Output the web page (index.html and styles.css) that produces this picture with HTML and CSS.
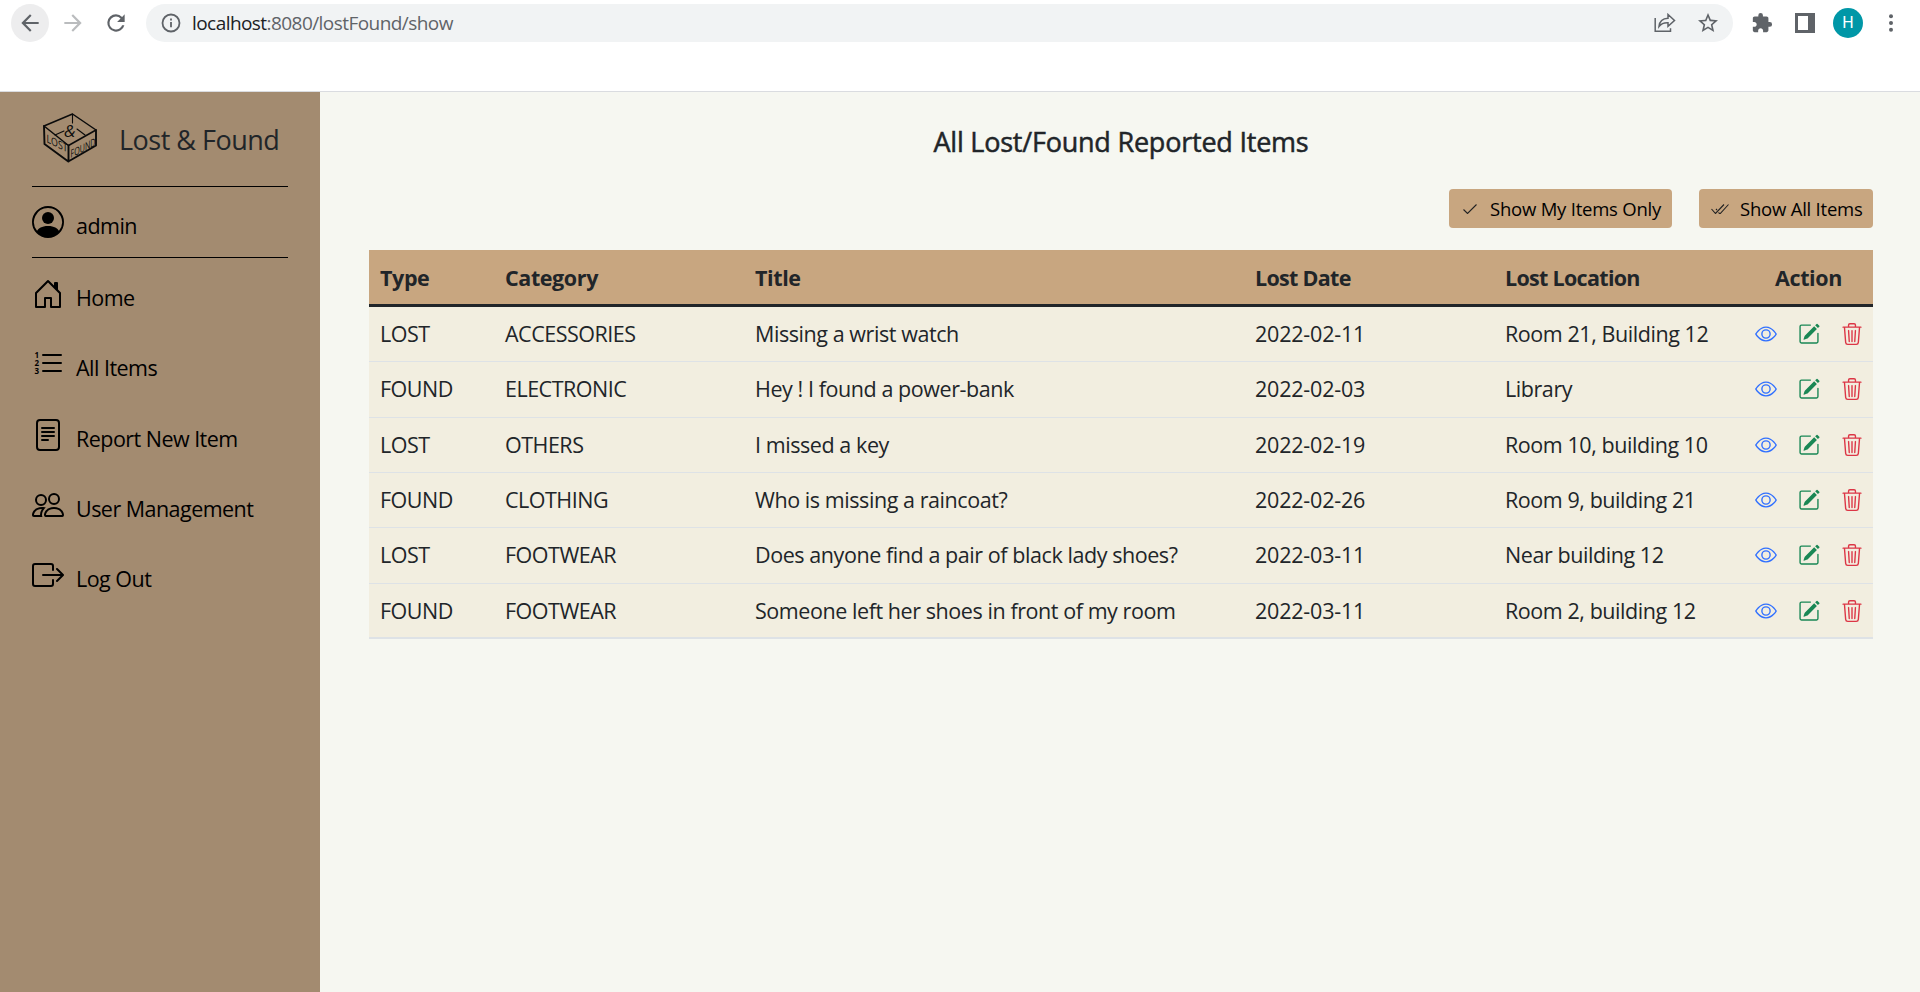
FILE: index.html
```
<!DOCTYPE html>
<html lang="en">
<head>
<meta charset="utf-8">
<title>Lost &amp; Found</title>
<link rel="stylesheet" href="styles.css">
</head>
<body>
<svg class="defs" width="0" height="0">
  <symbol id="eye" viewBox="0 0 16 16"><path d="M16 8s-3-5.500-8-5.500S0 8 0 8s3 5.500 8 5.500S16 8 16 8zM1.173 8a13.133 13.133 0 0 1 1.660-2.043C4.120 4.668 5.880 3.500 8 3.500c2.120 0 3.879 1.168 5.168 2.457A13.133 13.133 0 0 1 14.828 8c-.058.087-.122.183-.195.288-.335.480-.830 1.120-1.465 1.755C11.879 11.332 10.119 12.500 8 12.500c-2.120 0-3.879-1.168-5.168-2.457A13.134 13.134 0 0 1 1.172 8z"/><path d="M8 5.500a2.500 2.500 0 1 0 0 5 2.500 2.500 0 0 0 0-5zM4.500 8a3.500 3.500 0 1 1 7 0 3.500 3.500 0 0 1-7 0z"/></symbol>
  <symbol id="edit" viewBox="0 0 16 16"><path d="M15.502 1.940a.5.5 0 0 1 0 .706L14.459 3.690l-2-2L13.502.646a.5.5 0 0 1 .707 0l1.293 1.293zm-1.750 2.456-2-2L4.939 9.210a.5.5 0 0 0-.121.196l-.805 2.414a.250.250 0 0 0 .316.316l2.414-.805a.5.5 0 0 0 .196-.120l6.813-6.814z"/><path fill-rule="evenodd" d="M1 13.500A1.500 1.500 0 0 0 2.500 15h11a1.500 1.500 0 0 0 1.500-1.500v-6a.5.5 0 0 0-1 0v6a.5.5 0 0 1-.5.5h-11a.5.5 0 0 1-.5-.5v-11a.5.5 0 0 1 .5-.5H9a.5.5 0 0 0 0-1H2.500A1.500 1.500 0 0 0 1 2.500v11z"/></symbol>
  <symbol id="trash" viewBox="0 0 16 16"><path d="M6.500 1h3a.5.5 0 0 1 .5.5v1H6v-1a.5.5 0 0 1 .5-.5ZM11 2.500v-1A1.500 1.500 0 0 0 9.500 0h-3A1.500 1.500 0 0 0 5 1.500v1H2.506a.580.580 0 0 0-.010 0H1.500a.5.5 0 0 0 0 1h.538l.853 10.660A2 2 0 0 0 4.885 16h6.230a2 2 0 0 0 1.994-1.840l.853-10.660h.538a.5.5 0 0 0 0-1h-.995a.590.590 0 0 0-.010 0H11Zm1.958 1-.846 10.580a1 1 0 0 1-.997.920h-6.230a1 1 0 0 1-.997-.920L3.042 3.500h9.916Z"/><path d="M5.500 5.500l.5 8M8 5.500v8M10.500 5.500l-.5 8" stroke="currentColor" stroke-width="1" stroke-linecap="round" fill="none"/></symbol>
</svg>

<header class="toolbar">
  <div class="tool back"><svg viewBox="0 0 24 24"><path d="M20 11H7.830l5.590-5.590L12 4l-8 8 8 8 1.410-1.410L7.830 13H20z"/></svg></div>
  <div class="tool forward"><svg viewBox="0 0 24 24"><path d="M4 11h12.170l-5.590-5.590L12 4l8 8-8 8-1.410-1.410L16.170 13H4z"/></svg></div>
  <div class="tool reload"><svg viewBox="0 0 24 24"><path d="M17.650 6.350A7.958 7.958 0 0 0 12 4a8 8 0 1 0 7.730 10h-2.080A6 6 0 1 1 12 6c1.660 0 3.140.690 4.220 1.780L13 11h7V4z"/></svg></div>
  <div class="address">
    <svg class="info" viewBox="0 0 20 20" fill="none" stroke="#5f6368" stroke-width="1.800"><circle cx="10" cy="10" r="8.500"/><path d="M10 9v5.200M10 5.500v2"/></svg>
    <span class="url"><span class="host">localhost</span>:8080/lostFound/show</span>
    <svg class="share" viewBox="0 0 22 20" fill="none" stroke="#5f6368" stroke-width="1.500"><path d="M1.200 5v13.200h15.300v-3"/><path d="M5 13.500C5.500 8.500 9 5.500 14 5.300V1.500L20.500 7.500 14 13.300V9.800C10 9.600 7 11 5 13.500z"/></svg>
    <svg class="star" viewBox="0 0 24 24"><path d="M22 9.240l-7.190-.620L12 2 9.190 8.630 2 9.240l5.460 4.730L5.820 21 12 17.270 18.180 21l-1.630-7.030L22 9.240zM12 15.400l-3.760 2.270 1-4.280-3.320-2.880 4.380-.380L12 6.100l1.710 4.040 4.380.380-3.320 2.880 1 4.280L12 15.400z"/></svg>
  </div>
  <svg class="puzzle" viewBox="0 0 24 24"><path d="M20.500 11H19V7c0-1.100-.9-2-2-2h-4V3.500a2.500 2.500 0 0 0-5 0V5H4c-1.100 0-1.990.9-1.990 2v3.800H3.500c1.490 0 2.700 1.210 2.700 2.700s-1.210 2.700-2.700 2.700H2V20c0 1.100.9 2 2 2h3.800v-1.500c0-1.490 1.210-2.700 2.700-2.700s2.700 1.210 2.700 2.700V22H17c1.100 0 2-.9 2-2v-4h1.500a2.500 2.500 0 0 0 0-5z"/></svg>
  <svg class="panel" viewBox="0 0 20 20"><path fill-rule="evenodd" d="M0 0h20v20H0zM3 3v14h10V3z"/></svg>
  <div class="avatar">H</div>
  <svg class="dots" viewBox="0 0 4 18"><circle cx="2" cy="2.300" r="2"/><circle cx="2" cy="9" r="2"/><circle cx="2" cy="15.700" r="2"/></svg>
</header>

<div class="page">
  <nav class="sidebar">
    <div class="brand">
      <svg class="logo" viewBox="0 0 54 50">
        <path class="rim" d="M1 13L29.500 1 53 17 25.500 32.500z"/>
        <path class="side" d="M1 13L1.500 31 25.300 48.500 53 32.500V17M25.500 32.500v16"/>
        <path class="fold" d="M29.500 1v9M12 22l9-4M34 16l8 6"/>
        <text class="amp" x="21" y="24">&amp;</text>
        <text class="word" transform="matrix(1 .5 0 1 3.500 29)" textLength="21" lengthAdjust="spacingAndGlyphs">LOST</text>
        <text class="word" transform="matrix(1 -.5 0 1 27.500 45)" textLength="25" lengthAdjust="spacingAndGlyphs">FOUND</text>
      </svg>
      <span>Lost &amp; Found</span>
    </div>
    <div class="user item">
      <svg viewBox="0 0 16 16"><path d="M11 6a3 3 0 1 1-6 0 3 3 0 0 1 6 0z"/><path fill-rule="evenodd" d="M0 8a8 8 0 1 1 16 0A8 8 0 0 1 0 8zm8-7a7 7 0 0 0-5.468 11.370C3.242 11.226 4.805 10 8 10s4.757 1.225 5.468 2.370A7 7 0 0 0 8 1z"/></svg>
      <span>admin</span>
    </div>
    <div class="menu">
      <div class="item"><svg viewBox="0 0 16 16"><path d="M8.354 1.146a.5.5 0 0 0-.708 0l-6 6A.5.5 0 0 0 1.500 7.500v7a.5.5 0 0 0 .5.5h4.500a.5.5 0 0 0 .5-.5v-4h2v4a.5.5 0 0 0 .5.5H14a.5.5 0 0 0 .5-.5v-7a.5.5 0 0 0-.146-.354L13 5.793V2.500a.5.5 0 0 0-.5-.5h-1a.5.5 0 0 0-.5.5v1.293L8.354 1.146zM2.500 14V7.707l5.500-5.500 5.500 5.500V14H10v-4a.5.5 0 0 0-.5-.5h-3a.5.5 0 0 0-.5.5v4H2.500z"/></svg><span>Home</span></div>
      <div class="item"><svg viewBox="0 0 16 16"><path d="M5.500 3.500h9M5.500 7.500h9M5.500 11.500h9" stroke="#000" stroke-linecap="round"/><text class="digit" x="1.300" y="4.900">1</text><text class="digit" x="1.300" y="8.900">2</text><text class="digit" x="1.300" y="12.900">3</text></svg><span>All Items</span></div>
      <div class="item"><svg viewBox="0 0 16 16"><path d="M5 4a.5.5 0 0 0 0 1h6a.5.5 0 0 0 0-1H5zm-.5 2.500A.5.5 0 0 1 5 6h6a.5.5 0 0 1 0 1H5a.5.5 0 0 1-.5-.5zM5 8a.5.5 0 0 0 0 1h6a.5.5 0 0 0 0-1H5zm0 2a.5.5 0 0 0 0 1h3a.5.5 0 0 0 0-1H5z"/><path d="M2 2a2 2 0 0 1 2-2h8a2 2 0 0 1 2 2v12a2 2 0 0 1-2 2H4a2 2 0 0 1-2-2V2zm10-1H4a1 1 0 0 0-1 1v12a1 1 0 0 0 1 1h8a1 1 0 0 0 1-1V2a1 1 0 0 0-1-1z"/></svg><span>Report New Item</span></div>
      <div class="item"><svg viewBox="0 0 16 16"><path d="M15 14s1 0 1-1-1-4-5-4-5 3-5 4 1 1 1 1h8zm-7.978-1A.261.261 0 0 1 7 12.996c.001-.264.167-1.030.760-1.720C8.312 10.629 9.282 10 11 10c1.717 0 2.687.630 3.240 1.276.593.690.758 1.457.760 1.720l-.008.002a.274.274 0 0 1-.014.002H7.022zM11 7a2 2 0 1 0 0-4 2 2 0 0 0 0 4zm3-2a3 3 0 1 1-6 0 3 3 0 0 1 6 0zM6.936 9.280a5.880 5.880 0 0 0-1.230-.247A7.350 7.350 0 0 0 5 9c-4 0-5 3-5 4 0 .667.333 1 1 1h4.216A2.238 2.238 0 0 1 5 13c0-1.010.377-2.042 1.090-2.904.243-.294.526-.569.846-.816zM4.920 10A5.493 5.493 0 0 0 4 13H1c0-.260.164-1.030.760-1.724.545-.636 1.492-1.256 3.160-1.275zM1.500 5.500a3 3 0 1 1 6 0 3 3 0 0 1-6 0zm3-2a2 2 0 1 0 0 4 2 2 0 0 0 0-4z"/></svg><span>User Management</span></div>
      <div class="item"><svg viewBox="0 0 16 16"><path d="M10 12.500a.5.5 0 0 1-.5.5h-8a.5.5 0 0 1-.5-.5v-9a.5.5 0 0 1 .5-.5h8a.5.5 0 0 1 .5.5v2a.5.5 0 0 0 1 0v-2A1.500 1.500 0 0 0 9.500 2h-8A1.500 1.500 0 0 0 0 3.500v9A1.500 1.500 0 0 0 1.500 14h8a1.500 1.500 0 0 0 1.500-1.500v-2a.5.5 0 0 0-1 0v2z"/><path d="M15.854 8.354a.5.5 0 0 0 0-.708l-3-3a.5.5 0 0 0-.708.708L14.293 7.500H5.500a.5.5 0 0 0 0 1h8.793l-2.147 2.146a.5.5 0 0 0 .708.708l3-3z"/></svg><span>Log Out</span></div>
    </div>
  </nav>

  <main class="main">
    <h1 class="heading">All Lost/Found Reported Items</h1>
    <div class="buttons">
      <button class="btn"><svg class="check" viewBox="0 0 14 10"><path d="M.5 5.500L4.500 9.500 13.500.5"/></svg><span>Show My Items Only</span></button>
      <button class="btn"><svg class="checks" viewBox="0 0 18 10"><path d="M.5 5L4.500 9.500 13 .5M5 5l1 1M7.500 8.500L9 9.800 17.500.5"/></svg><span>Show All Items</span></button>
    </div>
    <div class="table" id="table">
      <div class="row head"><span>Type</span><span>Category</span><span>Title</span><span class="lost">Lost Date</span><span class="lost">Lost Location</span><span class="action">Action</span></div>
    </div>
  </main>
</div>
<script src="app.js"></script>
</body>
</html>
```
FILE: styles.css
```
* { box-sizing: border-box; }
body { margin: 0; height: 992px; overflow: hidden; display: flex; flex-direction: column; font-family: "Open Sans", "Noto Sans", sans-serif; font-size: 21.5px; color: #212529; background: #fff; }
svg { display: block; flex: none; }
.defs { position: absolute; }

.toolbar { height: 92px; padding: 4px 24px 0 11px; border-bottom: 1px solid #dadce0; display: flex; align-items: flex-start; fill: #5f6368; }
.tool { width: 38px; height: 38px; border-radius: 50%; display: grid; place-items: center; margin-right: 5px; }
.tool svg { width: 26px; height: 26px; }
.back { background: #ededee; }
.forward { fill: #babcbe; }
.address { width: 1587px; height: 38px; margin-left: 6px; padding: 0 13px 0 15px; border-radius: 19px; background: #f1f3f4; display: flex; align-items: center; }
.info { width: 20px; height: 20px; }
.url { margin-left: 11px; flex: 1; font-size: 19px; letter-spacing: -0.56px; color: #5f6368; white-space: nowrap; }
.host { color: #202124; }
.share { width: 22px; height: 20px; margin-right: 20px; }
.star { width: 24px; height: 24px; }
.puzzle { width: 22px; height: 22px; margin: 8px 0 0 18px; }
.panel { width: 20px; height: 20px; margin: 9px 0 0 22px; }
.avatar { width: 30px; height: 30px; margin: 4px 0 0 18px; border-radius: 50%; background: #0097a7; color: #fff; font: 16px/30px Roboto, sans-serif; text-align: center; }
.dots { width: 4px; height: 18px; margin: 10px 0 0 26px; }

.page { flex: 1; display: flex; }
.sidebar { width: 320px; padding: 0 32px; background: #a38b70; }
.brand { height: 95px; padding: 21px 0 0 11px; display: flex; border-bottom: 1px solid #000; font-size: 27px; line-height: 54px; letter-spacing: -0.5px; white-space: nowrap; }
.logo { width: 54px; height: 50px; margin-right: 22px; letter-spacing: 0; overflow: visible; }
.logo path { fill: none; stroke: #0b0b0b; stroke-linecap: round; stroke-linejoin: round; }
.rim { stroke-width: 1.5; }
.side { stroke-width: 1.9; }
.fold { stroke-width: 1.1; }
.amp { font: italic 17px "Open Sans", sans-serif; fill: #0b0b0b; }
.word { font: 11px "Open Sans", sans-serif; fill: #0b0b0b; }
.item { height: 70.25px; display: flex; gap: 12px; color: #000; line-height: 40px; letter-spacing: -0.53px; white-space: nowrap; }
.item svg { width: 32px; height: 32px; letter-spacing: 0; }
.user { height: 71px; padding-top: 19px; border-bottom: 1px solid #000; }
.menu { padding-top: 20px; }
.digit { font: bold 4px "Open Sans", sans-serif; }

.main { flex: 1; padding: 0 47px 0 49px; background: #f6f7f1; }
.heading { height: 97px; margin: 0; padding-top: 29.5px; font-size: 27px; line-height: 40px; font-weight: 500; letter-spacing: -0.22px; text-align: center; -webkit-text-stroke: 0.5px #212529; }
.buttons { display: flex; justify-content: flex-end; gap: 27px; }
.btn { height: 39px; padding: 0; width: 223px; border: 0; border-radius: 4px; background: #c8a680; color: #000; font: 18.5px/39px "Open Sans", sans-serif; letter-spacing: -0.22px; display: flex; align-items: center; white-space: nowrap; }
.btn + .btn { width: 174px; }
.btn path { fill: none; stroke: #222; stroke-width: 1.1; }
.check { width: 14px; height: 10px; margin: 0 13px 0 14px; }
.checks { width: 18px; height: 10px; margin: 0 11px 0 12px; }

.table { margin-top: 22px; }
.row { display: grid; grid-template-columns: 125px 250px 500px 250px 250px 1fr; height: 55.33px; background: #f2eee0; border-bottom: 1px solid #dee2e6; line-height: 54px; letter-spacing: -0.43px; white-space: nowrap; }
.row > * { padding-left: 11px; min-width: 0; }
.row:last-child { border-bottom-width: 2px; }
.row .type, .row .category { letter-spacing: -0.5px; }
.row .date { letter-spacing: -0.2px; }
.head { height: 57px; background: #c8a680; border-bottom: 3px solid #212529; font-weight: 700; line-height: 56px; letter-spacing: -0.4px; }
.head .lost { letter-spacing: -0.7px; }
.row .action { padding: 0; text-align: center; }
.actions { display: flex; align-items: center; gap: 21.2px; }
.actions svg { width: 22px; height: 22px; fill: currentColor; }
.eye { color: #2f6fff; }
.edit { color: #198754; }
.trash { color: #dc3545; }
```
FILE: app.js
```
const items = [
  ["LOST", "ACCESSORIES", "Missing a wrist watch", "2022-02-11", "Room 21, Building 12"],
  ["FOUND", "ELECTRONIC", "Hey ! I found a power-bank", "2022-02-03", "Library"],
  ["LOST", "OTHERS", "I missed a key", "2022-02-19", "Room 10, building 10"],
  ["FOUND", "CLOTHING", "Who is missing a raincoat?", "2022-02-26", "Room 9, building 21"],
  ["LOST", "FOOTWEAR", "Does anyone find a pair of black lady shoes?", "2022-03-11", "Near building 12"],
  ["FOUND", "FOOTWEAR", "Someone left her shoes in front of my room", "2022-03-11", "Room 2, building 12"]
];
const columns = ["type", "category", "title", "date", "location"];
const icon = (n) => `<svg class="${n}"><use href="#${n}"/></svg>`;
const table = document.getElementById("table");
items.forEach((r) => {
  const cells = r.map((c, i) => `<span class="${columns[i]}">${c}</span>`).join("");
  table.insertAdjacentHTML("beforeend", `<div class="row">${cells}<span class="actions">${icon("eye")}${icon("edit")}${icon("trash")}</span></div>`);
});
```
